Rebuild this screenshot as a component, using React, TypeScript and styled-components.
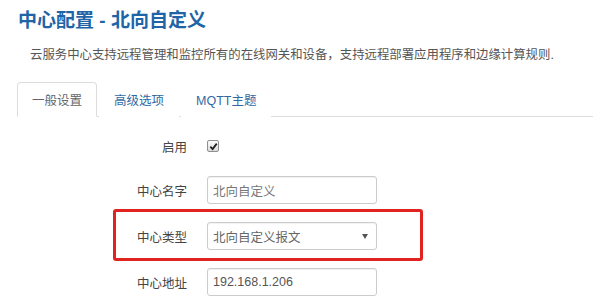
import React from "react";
import styled, { createGlobalStyle } from "styled-components";

const GlobalStyle = createGlobalStyle`
  html, body {
    margin: 0;
    padding: 0;
    background: #fff;
  }
  body {
    font-family: "Liberation Sans", "Noto Sans CJK SC", sans-serif;
    color: #555;
  }
`;

const Page = styled.div`
  padding: 9px 0 0 17px;
  width: 576px;
  overflow: hidden;
`;

const Title = styled.h2`
  margin: 0 0 13px 1px;
  font-size: 19px;
  line-height: 24px;
  font-weight: 700;
  color: #2064a7;
  white-space: nowrap;
`;

const Description = styled.p`
  margin: 0 0 18px 13px;
  font-size: 12.4px;
  line-height: 18px;
  color: #555;
  white-space: nowrap;
`;

const TabBar = styled.ul`
  display: flex;
  margin: 0;
  padding: 0;
  list-style: none;
  border-bottom: 1px solid #ddd;
`;

const Tab = styled.li<{ $active?: boolean }>`
  margin: 0 2px -1px 0;
  padding: 0 14px;
  height: 33px;
  display: flex;
  align-items: center;
  font-size: 12.5px;
  border: 1px solid ${(p) => (p.$active ? "#ddd" : "transparent")};
  border-bottom-color: ${(p) => (p.$active ? "#fff" : "transparent")};
  border-radius: 4px 4px 0 0;
  background: #fff;
  color: ${(p) => (p.$active ? "#666" : "#2f6aa6")};
  white-space: nowrap;
`;

const Form = styled.div`
  display: grid;
  grid-template-columns: 170px 170px;
  column-gap: 20px;
  row-gap: 18px;
  padding-top: 17px;
`;

const Label = styled.div<{ $short?: boolean }>`
  height: ${(p) => (p.$short ? "24px" : "28px")};
  display: flex;
  align-items: center;
  justify-content: flex-end;
  font-size: 12.5px;
  color: #444;
`;

const Control = styled.div<{ $short?: boolean; $highlight?: boolean }>`
  position: relative;
  height: ${(p) => (p.$short ? "24px" : "28px")};
  display: flex;
  align-items: center;

  ${(p) =>
    p.$highlight &&
    `
    &::after {
      content: "";
      position: absolute;
      top: -13px;
      bottom: -11px;
      left: -94px;
      width: 310px;
      border: 3px solid #e0231e;
      border-radius: 3px;
      pointer-events: none;
      box-sizing: border-box;
    }
  `}
`;

const CheckBox = styled.span`
  width: 12px;
  height: 12px;
  box-sizing: border-box;
  border: 1px solid #8f8f8f;
  border-radius: 2px;
  background: linear-gradient(#fdfdfd, #dcdcdc);
  display: flex;
  align-items: center;
  justify-content: center;
`;

const TextInput = styled.div<{ $dark?: boolean }>`
  width: 170px;
  height: 28px;
  box-sizing: border-box;
  border: 1px solid #ccc;
  border-radius: 3px;
  padding: 0 5px;
  display: flex;
  align-items: center;
  font-size: 12.5px;
  color: ${(p) => (p.$dark ? "#555" : "#777")};
  box-shadow: inset 0 1px 1px rgba(0, 0, 0, 0.06);
  white-space: nowrap;
`;

const Select = styled(TextInput)`
  justify-content: space-between;
  padding-right: 8px;
  color: #666;
`;

const Arrow = styled.span`
  width: 0;
  height: 0;
  border-left: 3px solid transparent;
  border-right: 3px solid transparent;
  border-top: 5px solid #555;
`;

const App: React.FC = () => {
  return (
    <>
      <GlobalStyle />
      <Page>
        <Title>中心配置 - 北向自定义</Title>
        <Description>
          云服务中心支持远程管理和监控所有的在线网关和设备，支持远程部署应用程序和边缘计算规则.
        </Description>
        <TabBar>
          <Tab $active>一般设置</Tab>
          <Tab>高级选项</Tab>
          <Tab>MQTT主题</Tab>
        </TabBar>
        <Form>
          <Label $short>启用</Label>
          <Control $short>
            <CheckBox>
              <svg width="9" height="9" viewBox="0 0 10 10">
                <path
                  d="M1.5 5.2 L4 7.8 L8.6 1.8"
                  fill="none"
                  stroke="#222"
                  strokeWidth="2"
                />
              </svg>
            </CheckBox>
          </Control>

          <Label>中心名字</Label>
          <Control>
            <TextInput>北向自定义</TextInput>
          </Control>

          <Label>中心类型</Label>
          <Control $highlight>
            <Select>
              北向自定义报文
              <Arrow />
            </Select>
          </Control>

          <Label>中心地址</Label>
          <Control>
            <TextInput $dark>192.168.1.206</TextInput>
          </Control>
        </Form>
      </Page>
    </>
  );
};

export default App;
